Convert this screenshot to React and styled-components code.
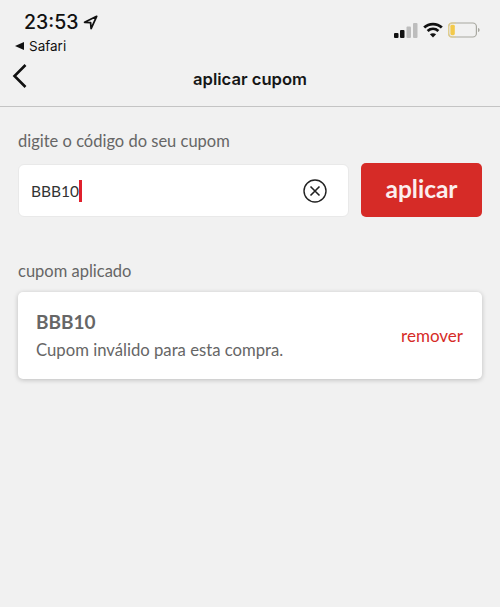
import React from 'react';
import styled, { createGlobalStyle } from 'styled-components';

const GlobalStyle = createGlobalStyle`
  html, body {
    margin: 0;
    padding: 0;
    background: #f1f1f1;
  }
  * {
    box-sizing: border-box;
  }
`;

const Page = styled.div`
  width: 500px;
  height: 607px;
  overflow: hidden;
  background: #f1f1f1;
  font-family: "Lato", sans-serif;
`;

const StatusBar = styled.div`
  height: 58px;
  padding: 9px 20px 0 15px;
  display: flex;
  justify-content: space-between;
  font-family: "Inter", sans-serif;
  color: #111;
`;

const StatusLeft = styled.div`
  display: flex;
  flex-direction: column;
`;

const Clock = styled.div`
  display: flex;
  align-items: center;
  gap: 5px;
  padding-left: 9px;
  height: 26px;
  font-size: 19.5px;
  font-weight: 500;
`;

const BackApp = styled.div`
  display: flex;
  align-items: center;
  gap: 5px;
  margin-top: 3px;
  font-size: 13.5px;
  line-height: 16px;
`;

const BackTriangle = styled.span`
  width: 0;
  height: 0;
  border-top: 4px solid transparent;
  border-bottom: 4px solid transparent;
  border-right: 9px solid #111;
`;

const StatusRight = styled.div`
  display: flex;
  align-items: center;
  gap: 5px;
  height: 24px;
  margin-top: 9px;
`;

const NavBar = styled.header`
  height: 49px;
  display: flex;
  align-items: center;
  justify-content: center;
  position: relative;
  border-bottom: 1px solid #c4c4c4;
  font-family: "Inter", sans-serif;
  font-size: 16.6px;
  font-weight: 600;
  color: #161616;
  padding-bottom: 7px;
`;

const BackButton = styled.button`
  position: absolute;
  left: 11px;
  top: 5px;
  padding: 0;
  width: 18px;
  height: 26px;
  border: 0;
  background: none;
  display: flex;
`;

const Content = styled.main`
  padding: 23px 18px 0;
`;

const SectionLabel = styled.div`
  font-size: 16.5px;
  line-height: 22px;
  color: #666;
`;

const CouponForm = styled.div`
  display: flex;
  gap: 12px;
  margin-top: 11px;
  height: 54px;
`;

const InputBox = styled.div`
  flex: 1;
  background: #fff;
  border: 1px solid #e9e9e9;
  border-radius: 6px;
  display: flex;
  align-items: center;
  justify-content: space-between;
  padding: 0 21px 0 12px;
  margin-top: 1px;
  height: 53px;
`;

const InputValue = styled.div`
  display: flex;
  align-items: center;
  font-size: 15.5px;
  color: #333;
`;

const Caret = styled.span`
  width: 2.5px;
  height: 22px;
  background: #e0202c;
`;

const ClearIcon = styled.svg`
  width: 24px;
  height: 24px;
  display: block;
`;

const ApplyButton = styled.button`
  width: 121px;
  border: 0;
  border-radius: 5px;
  background: #d62b27;
  color: #fbeeee;
  font-family: "Lato", sans-serif;
  font-size: 24.5px;
  font-weight: 700;
  padding: 0 0 3px;
`;

const AppliedSection = styled.section`
  margin-top: 43px;
`;

const CouponCard = styled.div`
  margin-top: 10px;
  height: 87px;
  padding: 0 19px 0 18px;
  background: #fff;
  border-radius: 5px;
  box-shadow: 0 1px 5px rgba(0, 0, 0, 0.22);
  display: flex;
  align-items: center;
  justify-content: space-between;
`;

const CardText = styled.div`
  display: flex;
  flex-direction: column;
  gap: 6px;
`;

const CouponCode = styled.div`
  font-size: 19px;
  line-height: 24px;
  font-weight: 700;
  color: #666;
`;

const CouponMessage = styled.div`
  font-size: 16.7px;
  line-height: 21px;
  color: #666;
`;

const RemoveLink = styled.a`
  font-size: 17px;
  color: #d62b27;
`;

const App = () => {
  return (
    <Page>
      <GlobalStyle />
      <StatusBar>
        <StatusLeft>
          <Clock>
            23:53
            <svg width="15" height="15" viewBox="0 0 17 17" fill="none">
              <path d="M15.5 1.5 L1.8 8.3 L8.6 8.7 L9.2 15.5 Z" stroke="#111" strokeWidth="2" strokeLinejoin="round" />
            </svg>
          </Clock>
          <BackApp>
            <BackTriangle />
            Safari
          </BackApp>
        </StatusLeft>
        <StatusRight>
          <svg width="24" height="15" viewBox="0 0 24 15">
            <rect x="0" y="10" width="4.5" height="5" rx="1" fill="#111" />
            <rect x="6" y="7" width="4.5" height="8" rx="1" fill="#111" />
            <rect x="12.5" y="3.5" width="4.5" height="11.5" rx="1" fill="#bdbdbd" />
            <rect x="19" y="0" width="4.5" height="15" rx="1" fill="#bdbdbd" />
          </svg>
          <svg width="20" height="16" viewBox="0 0 20 16" fill="none" stroke="#111" strokeWidth="2.8">
            <path d="M1.2 5.6 C6 1 14 1 18.8 5.6" />
            <path d="M4.6 9 C7.8 6.2 12.2 6.2 15.4 9" />
            <path d="M10 15.5 L6.9 12.3 C8.6 10.8 11.4 10.8 13.1 12.3 Z" fill="#111" stroke="none" />
          </svg>
          <svg width="32" height="16" viewBox="0 0 32 16" fill="none">
            <rect x="0.6" y="1" width="27.8" height="14" rx="3.6" stroke="#a8a8a0" strokeWidth="1.2" />
            <path d="M8 1 H4.2 C2.2 1 0.6 2.6 0.6 4.6 V11.4 C0.6 13.4 2.2 15 4.2 15 H8" stroke="#e3cf8c" strokeWidth="1.2" />
            <rect x="2.4" y="2.8" width="4.4" height="10.4" rx="1.4" fill="#f3c94a" />
            <path d="M30 6 C31.2 6.3 31.6 7 31.6 8 C31.6 9 31.2 9.7 30 10 Z" fill="#a8a8a0" />
          </svg>
        </StatusRight>
      </StatusBar>

      <NavBar>
        <BackButton aria-label="voltar">
          <svg width="18" height="26" viewBox="0 0 18 26" fill="none">
            <path d="M14.5 2 L3.5 13 L14.5 24" stroke="#111" strokeWidth="2.6" />
          </svg>
        </BackButton>
        aplicar cupom
      </NavBar>

      <Content>
        <SectionLabel>digite o código do seu cupom</SectionLabel>
        <CouponForm>
          <InputBox>
            <InputValue>
              BBB10
              <Caret />
            </InputValue>
            <ClearIcon viewBox="0 0 24 24" fill="none" stroke="#222" strokeWidth="1.4">
              <circle cx="12" cy="12" r="11" />
              <path d="M7.5 7.5 L16.5 16.5 M16.5 7.5 L7.5 16.5" strokeWidth="1.6" />
            </ClearIcon>
          </InputBox>
          <ApplyButton>aplicar</ApplyButton>
        </CouponForm>

        <AppliedSection>
          <SectionLabel>cupom aplicado</SectionLabel>
          <CouponCard>
            <CardText>
              <CouponCode>BBB10</CouponCode>
              <CouponMessage>Cupom inválido para esta compra.</CouponMessage>
            </CardText>
            <RemoveLink>remover</RemoveLink>
          </CouponCard>
        </AppliedSection>
      </Content>
    </Page>
  );
};

export default App;
